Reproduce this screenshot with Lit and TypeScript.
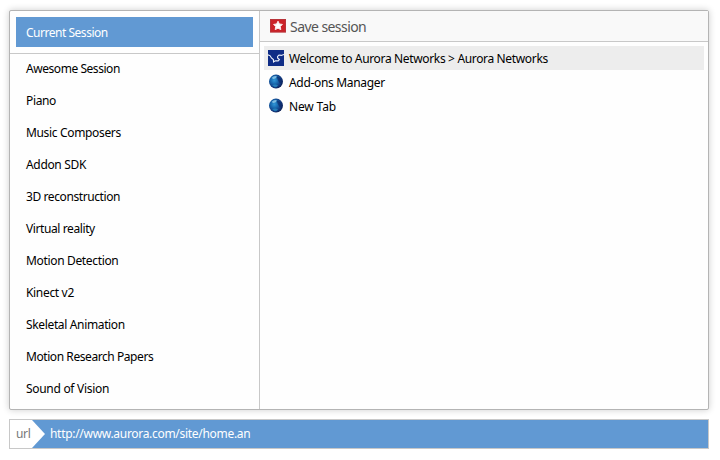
import { LitElement, html, css, svg } from "lit";
import { customElement, property } from "lit/decorators.js";

interface Label {
  title: string;
  tracking: number;
}

interface Tab extends Label {
  icon: "aurora" | "globe";
}

const sessions: Label[] = [
  { title: "Awesome Session", tracking: -0.45 },
  { title: "Piano", tracking: -0.35 },
  { title: "Music Composers", tracking: -0.34 },
  { title: "Addon SDK", tracking: -0.33 },
  { title: "3D reconstruction", tracking: -0.41 },
  { title: "Virtual reality", tracking: -0.4 },
  { title: "Motion Detection", tracking: -0.34 },
  { title: "Kinect v2", tracking: -0.33 },
  { title: "Skeletal Animation", tracking: -0.35 },
  { title: "Motion Research Papers", tracking: -0.43 },
  { title: "Sound of Vision", tracking: -0.3 },
];

const tabs: Tab[] = [
  { title: "Welcome to Aurora Networks > Aurora Networks", icon: "aurora", tracking: -0.345 },
  { title: "Add-ons Manager", icon: "globe", tracking: -0.33 },
  { title: "New Tab", icon: "globe", tracking: -0.15 },
];

@customElement("session-icon")
export class SessionIcon extends LitElement {
  @property() name = "globe";

  static styles = css`
    :host { display: block; width: 16px; height: 16px; flex: none; }
    svg { display: block; }
  `;

  private shapes() {
    if (this.name === "save") {
      return svg`
        <rect x="0.5" y="1.5" width="15" height="12.6" fill="#cb2228" stroke="#b8343a"/>
        <path d="M8 3.2 L9.4 6 L12.4 6.4 L10.3 8.5 L10.8 11.6 L8 10.2 L5.2 11.6 L5.7 8.5 L3.6 6.4 L6.6 6 Z"
          fill="#fff" stroke="#fbeaea" stroke-width="1" stroke-linejoin="round"/>`;
    }
    if (this.name === "aurora") {
      return svg`
        <rect width="16" height="16" fill="#0e2c86"/>
        <path d="M0 4.8 L2.2 5.8 L3.4 8 L5.4 9.6 L5.6 12.6 M5.6 11.8 L7.5 10.8 L10.2 10.9 L11.4 9.6 L9.6 8 L9.6 6.4 L11 5 L13.2 5.4 L16 4.4"
          fill="none" stroke="#eef2fb" stroke-width="1.1"/>`;
    }
    return svg`
      <defs>
        <radialGradient id="sea" cx="0.38" cy="0.4" r="0.66">
          <stop offset="0" stop-color="#3198d8"/>
          <stop offset="0.4" stop-color="#1868ae"/>
          <stop offset="0.75" stop-color="#123a80"/>
          <stop offset="1" stop-color="#0a1a4c"/>
        </radialGradient>
      </defs>
      <circle cx="8" cy="7.6" r="7" fill="url(#sea)"/>
      <path d="M8.6 2.4 Q12.4 2.8 14 6.5 L13.6 10 L11.2 8.6 L9.8 6 Z" fill="#0b2160" opacity="0.6"/>
      <path d="M4.2 11.2 Q7 9.8 10 11.2 Q9 13.6 6.8 13.2 Z" fill="#32b0e0" opacity="0.5"/>
      <path d="M3.8 3.8 Q6 1.4 9 2.4 L7.4 4.4 L5 5 Z" fill="#9ed6f2" opacity="0.75"/>`;
  }

  render() {
    return html`<svg width="16" height="16" viewBox="0 0 16 16">${this.shapes()}</svg>`;
  }
}

@customElement("app-root")
export class AppRoot extends LitElement {
  static styles = css`
    :host {
      display: flex;
      flex-direction: column;
      gap: 9px;
      box-sizing: border-box;
      width: 720px;
      height: 460px;
      padding: 10px 11px 11px 9px;
      background: #fff;
      overflow: hidden;
      font: 12px/16px "Noto Sans", "Open Sans", sans-serif;
      color: #000;
      white-space: nowrap;
    }
    .panel {
      display: flex;
      box-sizing: border-box;
      height: 400px;
      border: 1px solid #b4b4b4;
      border-radius: 2px;
      background: #fefefe;
      box-shadow: 0 0 7px rgba(0, 0, 0, 0.2);
    }
    .sidebar {
      box-sizing: border-box;
      width: 250px;
      border-right: 1px solid #c8c8c8;
    }
    .current {
      padding: 6px;
      border-bottom: 1px solid #c8c8c8;
    }
    .current-label {
      height: 30px;
      padding-left: 10px;
      line-height: 31px;
      letter-spacing: -0.48px;
      background: #6199d3;
      color: #fff;
    }
    .session { height: 32px; padding-left: 16px; line-height: 30px; }
    .content { flex: 1; }
    .toolbar {
      display: flex;
      align-items: center;
      gap: 4px;
      height: 30px;
      padding-left: 10px;
      border-bottom: 1px solid #c8c8c8;
      background: #f9f9f9;
      color: #555;
      font-size: 14px;
      line-height: 20px;
      letter-spacing: -0.56px;
    }
    .toolbar span { padding-top: 1px; }
    .tabs { padding: 4px; }
    .tab {
      display: flex;
      align-items: center;
      gap: 5px;
      height: 24px;
      padding-left: 4px;
    }
    .tab span { padding-top: 2px; }
    .tab.active { background: #ededed; }
    .url {
      display: flex;
      box-sizing: border-box;
      height: 30px;
      border: 1px solid #c8c8c8;
      background: #6199d3;
      color: #fff;
      line-height: 28px;
      letter-spacing: -0.3px;
    }
    .url-label {
      box-sizing: border-box;
      width: 35px;
      padding-left: 6px;
      background: #fff;
      color: #777;
      clip-path: polygon(0 0, 22px 0, 100% 50%, 22px 100%, 0 100%);
    }
    .address { padding-left: 5px; }
  `;

  render() {
    return html`
      <div class="panel">
        <div class="sidebar">
          <div class="current"><div class="current-label">Current Session</div></div>
          ${sessions.map((s) => html`
            <div class="session" style="letter-spacing:${s.tracking}px">${s.title}</div>`)}
        </div>
        <div class="content">
          <div class="toolbar"><session-icon name="save"></session-icon><span>Save session</span></div>
          <div class="tabs">
            ${tabs.map((tab, i) => html`
              <div class="tab ${i === 0 ? "active" : ""}">
                <session-icon name=${tab.icon}></session-icon>
                <span style="letter-spacing:${tab.tracking}px">${tab.title}</span>
              </div>`)}
          </div>
        </div>
      </div>
      <div class="url">
        <div class="url-label">url</div>
        <div class="address">http://www.aurora.com/site/home.an</div>
      </div>
    `;
  }
}
